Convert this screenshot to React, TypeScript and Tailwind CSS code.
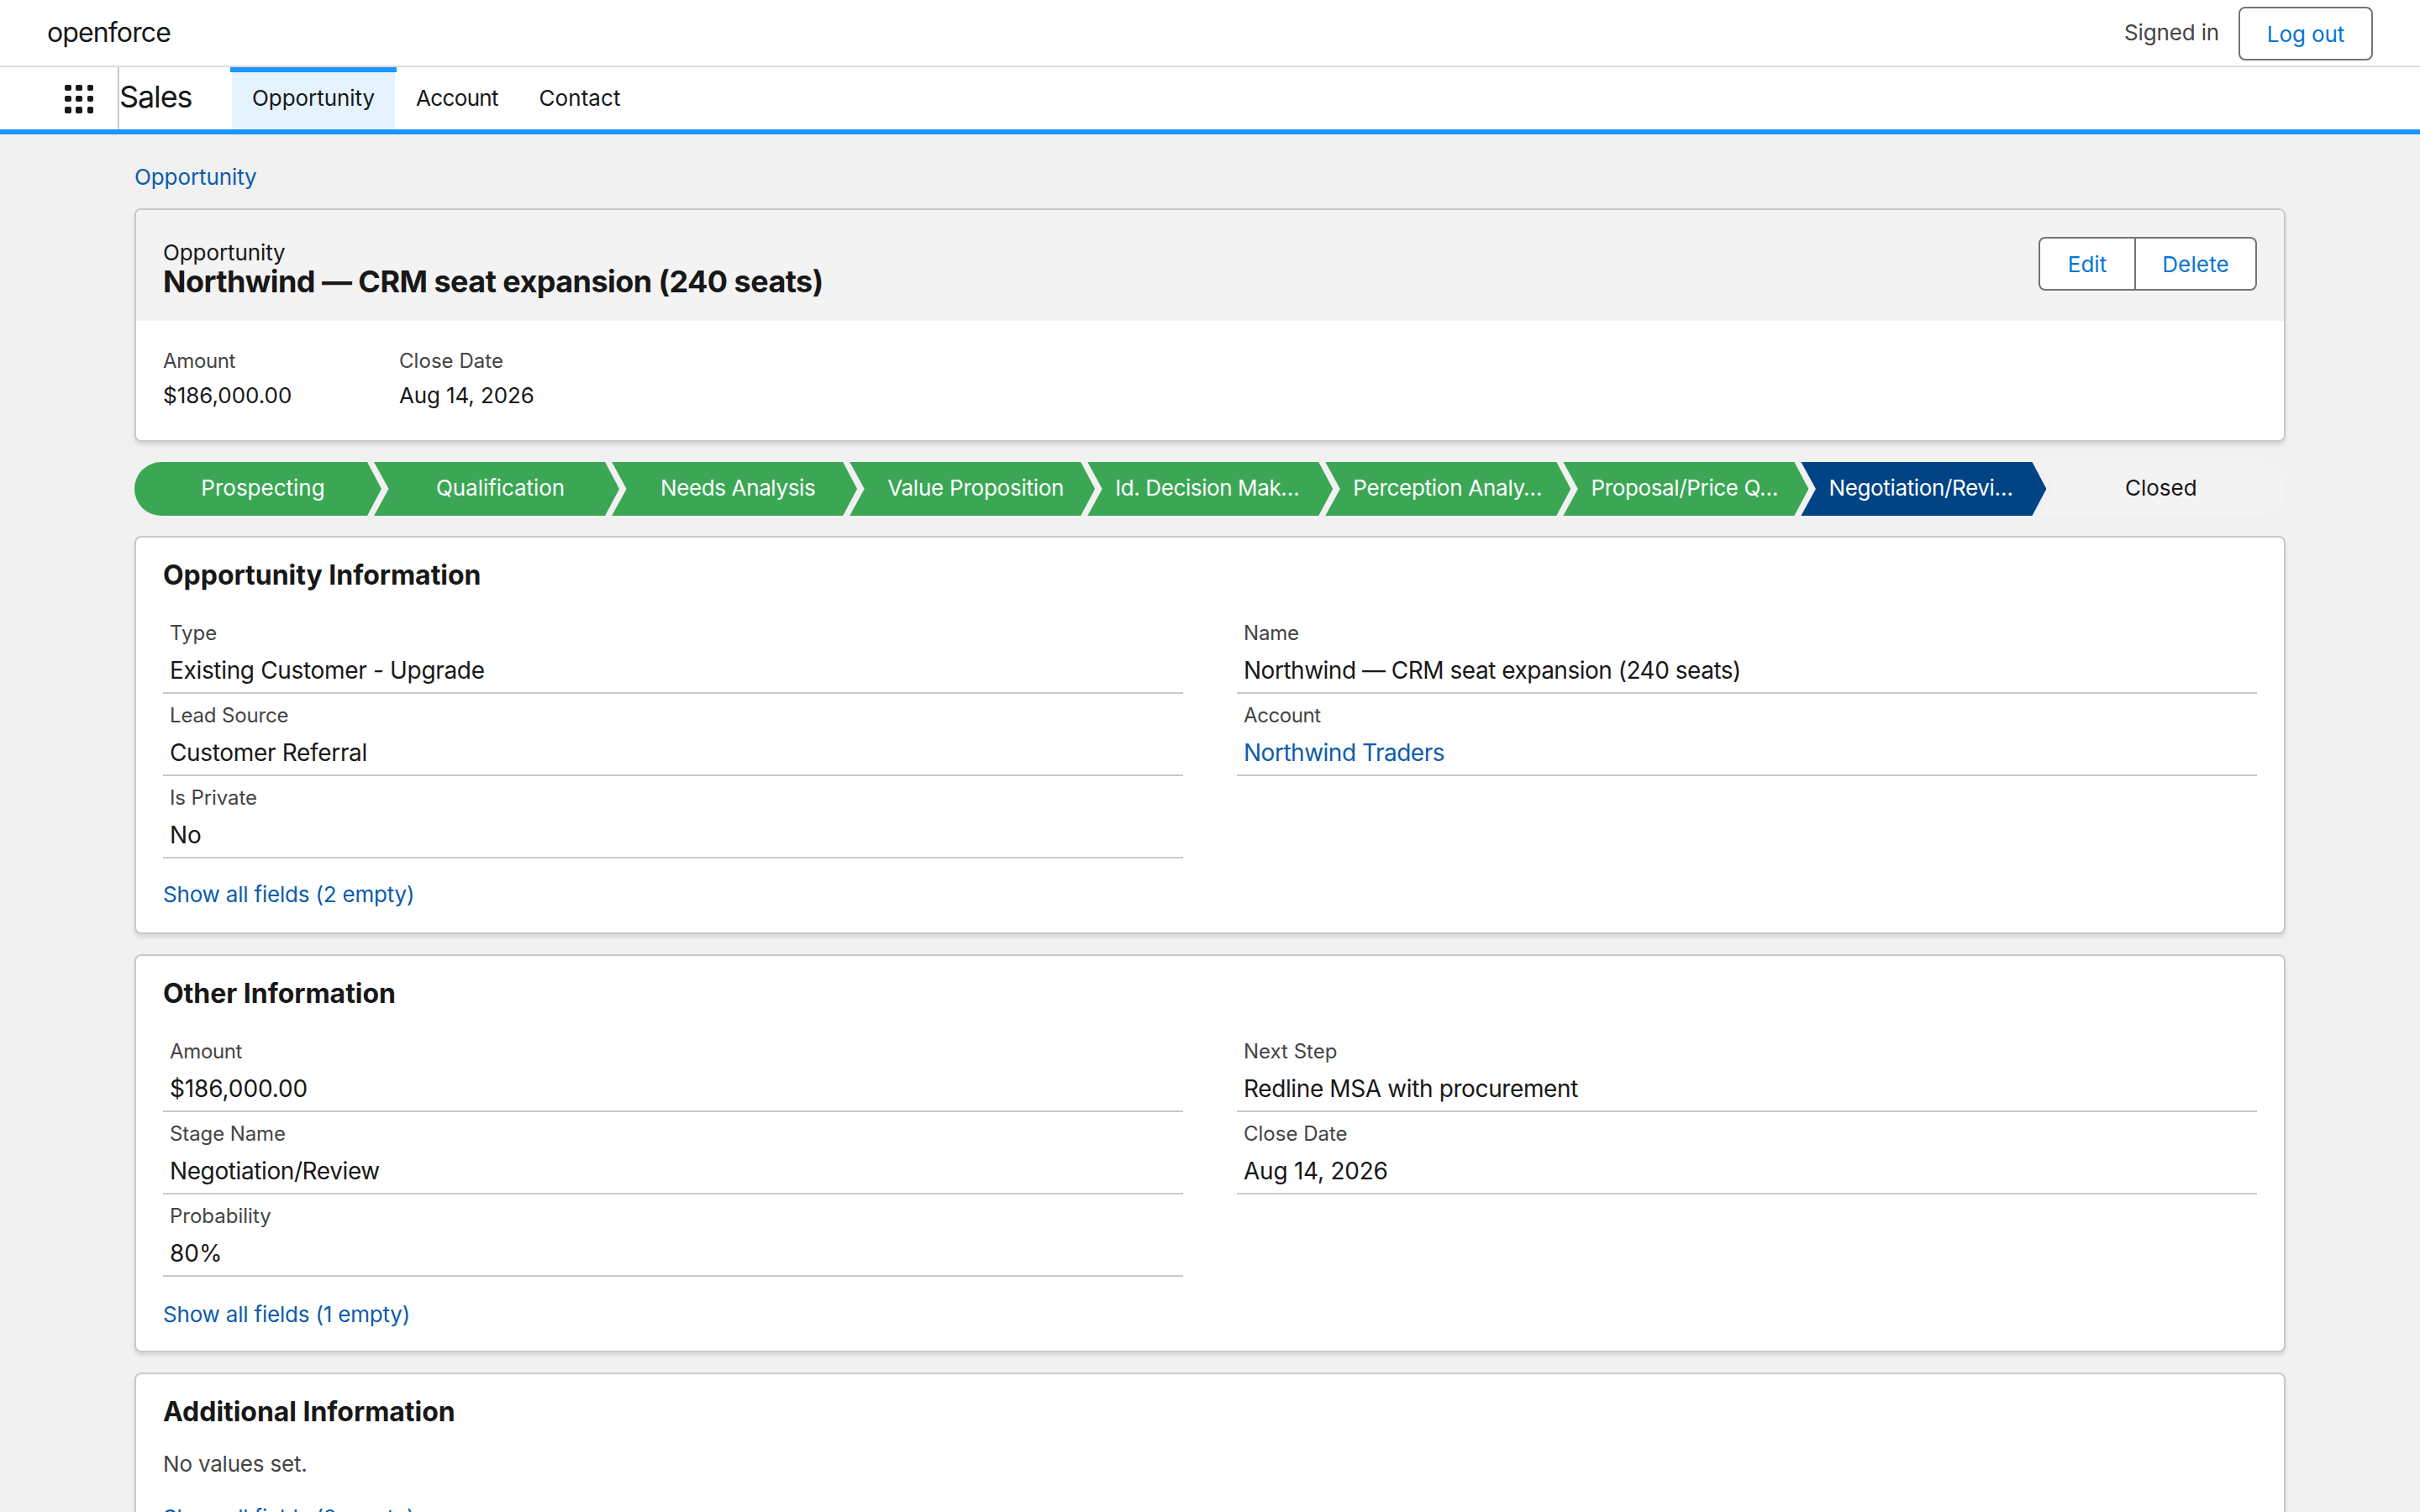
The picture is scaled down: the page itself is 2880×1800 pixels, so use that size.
import React from 'react';
import clsx from 'clsx';

type Field = {
  label: string;
  value: string;
  link?: boolean;
  tracking?: string;
  labelTracking?: string;
};

const tabs = [
  { name: 'Opportunity', width: 'w-[194px]', tracking: 'tracking-[-0.05px]', active: true },
  { name: 'Account', width: 'w-[148px]', tracking: 'tracking-[-0.66px]', active: false },
  { name: 'Contact', width: 'w-[144px]', tracking: 'tracking-[0.05px]', active: false },
];

const stages = [
  { name: 'Prospecting', state: 'done', style: 'pl-3' },
  { name: 'Qualification', state: 'done', style: 'pl-[9px] tracking-[-0.05px]' },
  { name: 'Needs Analysis', state: 'done', style: 'pl-2 tracking-[-0.37px]' },
  { name: 'Value Proposition', state: 'done', style: 'pl-2 tracking-[-0.24px]' },
  { name: 'Id. Decision Mak…', state: 'done', style: 'justify-start! pl-[33px] tracking-[-0.4px]' },
  { name: 'Perception Analy…', state: 'done', style: 'justify-start! pl-[33px] tracking-[-0.27px]' },
  { name: 'Proposal/Price Q…', state: 'done', style: 'justify-start! pl-[33px] tracking-[-0.35px]' },
  { name: 'Negotiation/Revi…', state: 'current', style: 'justify-start! pl-[33px] tracking-[-0.35px]' },
  { name: 'Closed', state: 'open', style: 'pr-[3px]' },
];

const opportunityLeft: Field[] = [
  { label: 'Type', value: 'Existing Customer - Upgrade', tracking: 'tracking-[-0.33px]' },
  { label: 'Lead Source', value: 'Customer Referral', tracking: 'tracking-[-0.33px]', labelTracking: 'tracking-[-0.15px]' },
  { label: 'Is Private', value: 'No', labelTracking: 'tracking-[-0.1px]' },
];

const opportunityRight: Field[] = [
  { label: 'Name', value: 'Northwind — CRM seat expansion (240 seats)', tracking: 'tracking-[-0.49px]', labelTracking: 'tracking-[-0.2px]' },
  { label: 'Account', value: 'Northwind Traders', link: true, tracking: 'tracking-[-0.49px]', labelTracking: 'tracking-[-0.4px]' },
];

const otherLeft: Field[] = [
  { label: 'Amount', value: '$186,000.00', tracking: 'tracking-[-0.12px]', labelTracking: 'tracking-[-0.35px]' },
  { label: 'Stage Name', value: 'Negotiation/Review', tracking: 'tracking-[-0.4px]', labelTracking: 'tracking-[-0.1px]' },
  { label: 'Probability', value: '80%' },
];

const otherRight: Field[] = [
  { label: 'Next Step', value: 'Redline MSA with procurement', tracking: 'tracking-[-0.38px]' },
  { label: 'Close Date', value: 'Aug 14, 2026', tracking: 'tracking-[-0.25px]' },
];

const TopBar: React.FC = () => (
  <header className="flex h-20 items-start justify-between border-b-2 border-[#dcdcdc] bg-white px-14">
    <span className="pt-[19px] text-[32px] leading-[39px] tracking-[-0.88px]">openforce</span>
    <div className="flex">
      <span className="mr-[23px] pt-[23px] text-[26px] leading-[31px] tracking-[-0.15px] text-[#444444]">Signed in</span>
      <button className="mt-2 h-16 w-40 rounded-lg border-2 border-[#747474] bg-white pt-px text-[26px] leading-[31px] tracking-[-0.1px] text-[#0176d3]">
        Log out
      </button>
    </div>
  </header>
);

const NavBar: React.FC = () => (
  <nav className="flex h-20 border-b-6 border-[#1b96ff] bg-white">
    <div className="flex w-[142px] items-center border-r-2 border-[#c9c9c9] pt-px pl-[77px]">
      <div className="grid grid-cols-3 gap-[5.75px]">
        {Array.from({ length: 9 }, (_, i) => (
          <span key={i} className="size-[7.5px] rounded-[2px] bg-[#181818]" />
        ))}
      </div>
    </div>
    <div className="w-[134px] pt-[13px] text-[36px] leading-[44px] tracking-[-1.1px]">Sales</div>
    {tabs.map((tab) => (
      <a
        key={tab.name}
        className={clsx(
          'relative flex items-center justify-center text-[26px] leading-[32px]',
          tab.width,
          tab.tracking,
          tab.active && 'bg-[#e5f3fe] before:absolute before:inset-x-[-2px] before:top-0 before:h-1.5 before:bg-[#1b96ff]',
        )}
      >
        {tab.name}
      </a>
    ))}
  </nav>
);

const Card: React.FC<{ className?: string; children: React.ReactNode }> = ({ className, children }) => (
  <section
    className={clsx(
      'overflow-hidden rounded-lg border-2 border-[#c9c9c9] bg-white shadow-[0_4px_4px_rgba(0,0,0,0.1)]',
      className,
    )}
  >
    {children}
  </section>
);

const RecordHeader: React.FC = () => (
  <Card className="h-[278px]">
    <div className="flex h-[132px] justify-between bg-[#f3f3f3] px-8">
      <div className="pt-[38px]">
        <p className="text-[26px] leading-[25px] tracking-[-0.1px]">Opportunity</p>
        <h1 className="text-[36px] leading-[44px] font-bold tracking-[-0.56px]">
          Northwind — CRM seat expansion (240 seats)
        </h1>
      </div>
      <div className="mt-8 flex h-16 rounded-lg border-2 border-[#747474] bg-white text-[26px] text-[#0176d3]">
        <button className="w-[114px] border-r-2 border-[#747474]">Edit</button>
        <button className="w-[142px] tracking-[0.15px]">Delete</button>
      </div>
    </div>
    <dl className="flex px-8 pt-[33px]">
      <div className="w-[281px]">
        <dt className="text-[24px] leading-[29px] tracking-[-0.35px] text-[#444444]">Amount</dt>
        <dd className="mt-[11px] text-[26px] leading-[31px] tracking-[-0.02px]">$186,000.00</dd>
      </div>
      <div>
        <dt className="text-[24px] leading-[29px] tracking-[0.05px] text-[#444444]">Close Date</dt>
        <dd className="mt-[11px] text-[26px] leading-[31px] tracking-[-0.12px]">Aug 14, 2026</dd>
      </div>
    </dl>
  </Card>
);

const StagePath: React.FC = () => (
  <ol className="my-6 flex h-16 text-[26px] leading-[31px]">
    {stages.map((stage, i) => {
      const first = i === 0;
      const last = i === stages.length - 1;
      return (
        <li
          key={stage.name}
          className={clsx(
            'flex items-center justify-center pb-[3px] whitespace-nowrap',
            first && 'w-[294px] shrink-0 rounded-l-full [clip-path:polygon(0_0,277px_0,100%_50%,277px_100%,0_100%)]',
            !first && !last && '-ml-[8.95px] w-[292px] shrink-0 [clip-path:polygon(0_0,275px_0,100%_50%,275px_100%,0_100%,17.5px_50%)]',
            last && '-ml-[8.95px] flex-1 rounded-r-full [clip-path:polygon(0_0,100%_0,100%_100%,0_100%,17.5px_50%)]',
            stage.state === 'done' && 'bg-[#3ba755] text-white',
            stage.state === 'current' && 'bg-[#014486] text-white',
            stage.state === 'open' && 'bg-[#f3f3f3]',
            stage.style,
          )}
        >
          {stage.name}
        </li>
      );
    })}
  </ol>
);

const FieldColumn: React.FC<{ fields: Field[] }> = ({ fields }) => (
  <dl>
    {fields.map((field) => (
      <div key={field.label} className="border-b-2 border-[#c9c9c9] pt-[11px] pb-[9px] pl-2">
        <dt className={clsx('text-[24px] leading-[29px] text-[#444444]', field.labelTracking)}>{field.label}</dt>
        <dd className={clsx('mt-[13px] text-[28px] leading-[34px]', field.tracking, field.link && 'text-[#0b5cab]')}>
          {field.value}
        </dd>
      </div>
    ))}
  </dl>
);

const SectionTitle: React.FC<{ children: React.ReactNode }> = ({ children }) => (
  <h2 className="pt-[25px] text-[32px] leading-[39px] font-bold tracking-[-0.04px]">{children}</h2>
);

const ShowAll: React.FC<{ count: number; className: string }> = ({ count, className }) => (
  <a className={clsx('block text-[26px] leading-[31px] tracking-[-0.2px] text-[#0b5cab]', className)}>
    Show all fields ({count} empty)
  </a>
);

export default function App() {
  return (
    <div className="h-[1800px] overflow-hidden bg-[#f1f1f1] font-['Inter',sans-serif] text-[#181818]">
      <TopBar />
      <NavBar />
      <main className="px-40 pt-[31px]">
        <a className="mb-[18px] block text-[26px] leading-[39px] tracking-[-0.1px] text-[#0b5cab]">Opportunity</a>
        <RecordHeader />
        <StagePath />
        <div className="flex flex-col gap-6">
          <Card className="h-[474px] px-8">
            <SectionTitle>Opportunity Information</SectionTitle>
            <div className="mt-6 grid grid-cols-2 gap-16">
              <FieldColumn fields={opportunityLeft} />
              <FieldColumn fields={opportunityRight} />
            </div>
            <ShowAll count={2} className="mt-[27px]" />
          </Card>
          <Card className="h-[474px] px-8">
            <SectionTitle>Other Information</SectionTitle>
            <div className="mt-6 grid grid-cols-2 gap-16">
              <FieldColumn fields={otherLeft} />
              <FieldColumn fields={otherRight} />
            </div>
            <ShowAll count={1} className="mt-[29px]" />
          </Card>
          <Card className="h-[260px] px-8">
            <SectionTitle>Additional Information</SectionTitle>
            <p className="mt-[27px] text-[26px] leading-[31px] tracking-[-0.2px] text-[#444444]">No values set.</p>
            <ShowAll count={2} className="mt-[33px]" />
          </Card>
        </div>
      </main>
    </div>
  );
}
